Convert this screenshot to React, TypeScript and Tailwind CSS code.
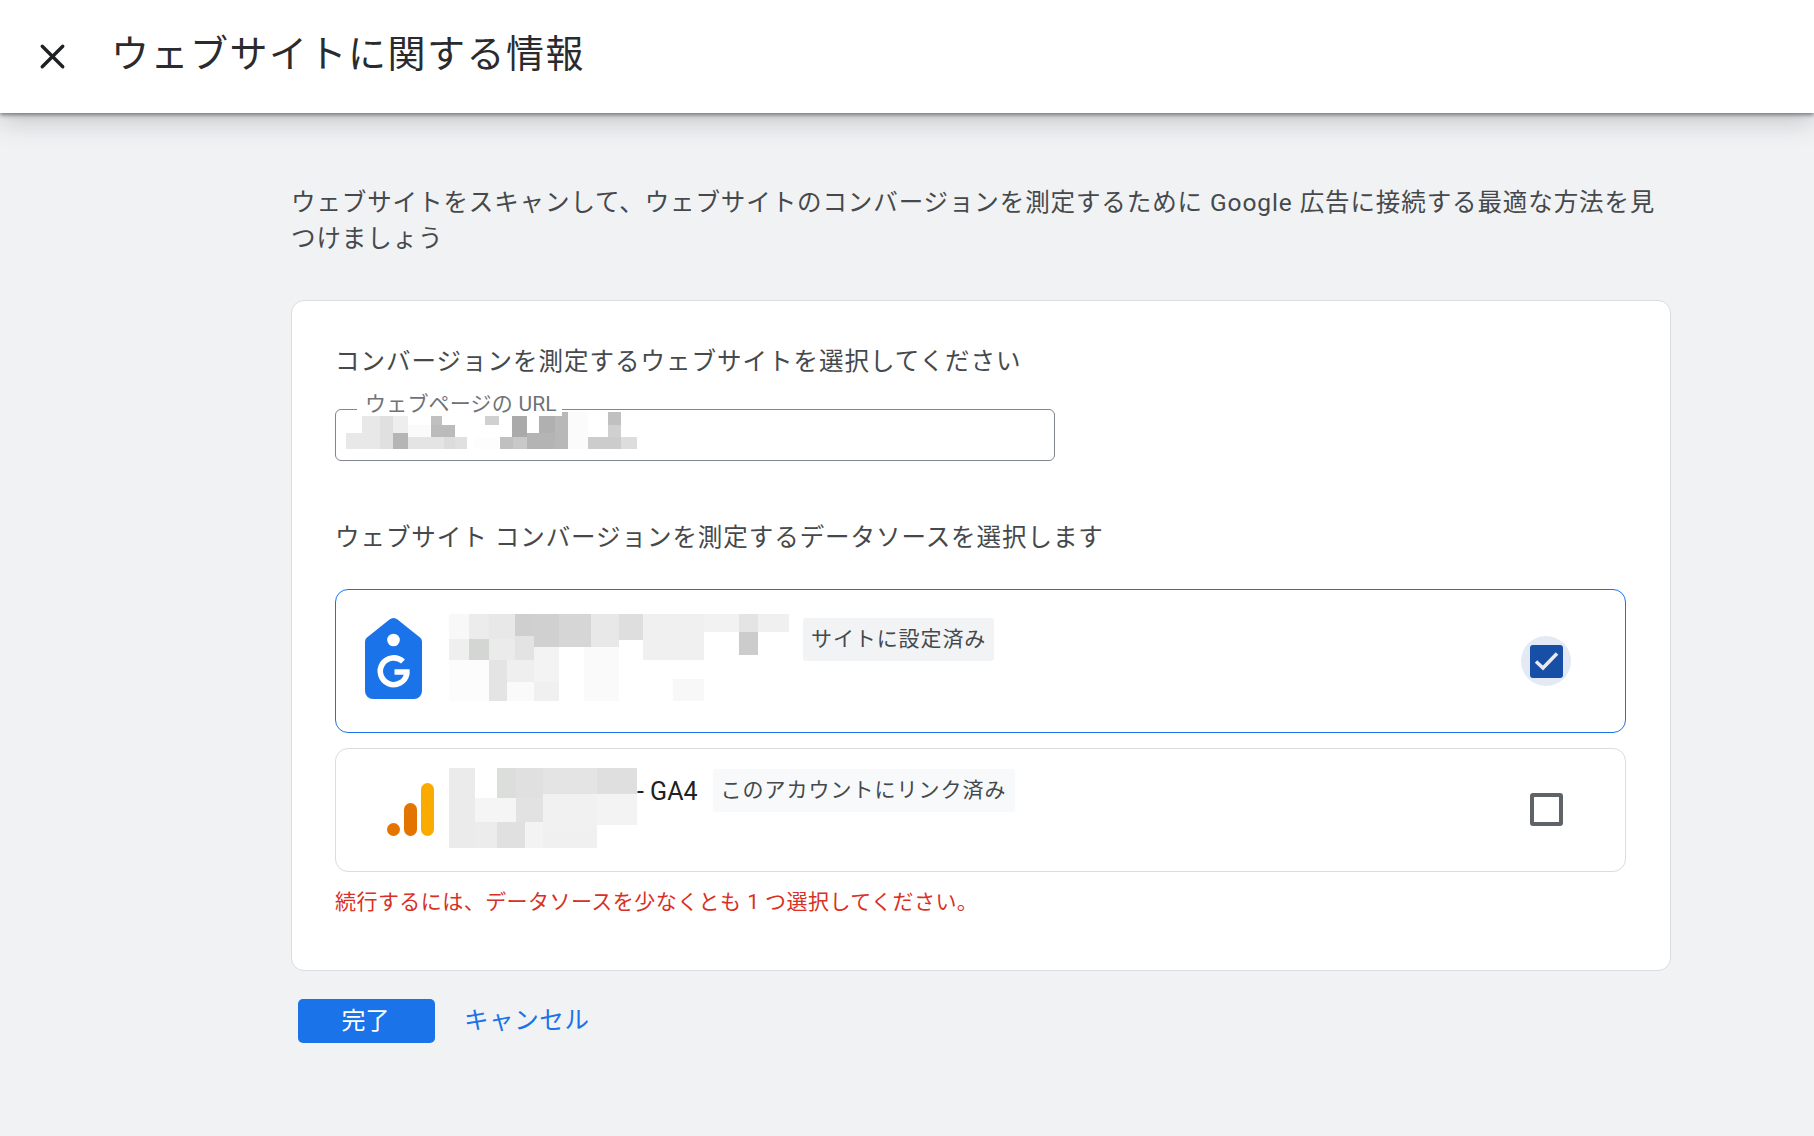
import { X } from "lucide-react";

type Block = [number, number, number, number, string];

const font = "font-['Roboto','Noto_Sans_CJK_JP',sans-serif]";

// redacted areas of the screenshot, in page coordinates
const urlBlocks: Block[] = [
  [362, 412, 18, 25, "#e8e8e8"],
  [380, 412, 13, 37, "#e0e0e0"],
  [393, 412, 15, 21, "#eeeeee"],
  [408, 425, 22, 12, "#fafafa"],
  [431, 412, 11, 13, "#c0c0c0"],
  [431, 425, 24, 12, "#bbbbbb"],
  [485, 412, 14, 13, "#d0d0d0"],
  [512, 412, 15, 25, "#aaaaaa"],
  [539, 412, 16, 25, "#b0b0b0"],
  [555, 412, 13, 25, "#b8b8b8"],
  [568, 412, 20, 37, "#fbfbfb"],
  [608, 412, 13, 13, "#c0c0c0"],
  [608, 425, 13, 12, "#d0d0d0"],
  [346, 433, 34, 16, "#e8e8e8"],
  [393, 433, 15, 16, "#b5b5b5"],
  [408, 437, 36, 12, "#e4e4e4"],
  [444, 437, 11, 12, "#dcdcdc"],
  [455, 437, 12, 12, "#e0e0e0"],
  [474, 437, 25, 12, "#fdfdfd"],
  [500, 437, 13, 12, "#c0c0c0"],
  [513, 437, 14, 12, "#c8c8c8"],
  [527, 433, 28, 16, "#b4b4b4"],
  [555, 437, 13, 12, "#b8b8b8"],
  [588, 437, 33, 12, "#cccccc"],
  [621, 437, 16, 12, "#dddddd"],
];

const adsBlocks: Block[] = [
  [449, 614, 20, 25, "#f8f8f8"],
  [469, 614, 20, 25, "#ececec"],
  [489, 614, 26, 25, "#e8e8e8"],
  [515, 614, 19, 22, "#cfcfcf"],
  [534, 614, 25, 33, "#d0d0d0"],
  [559, 614, 32, 33, "#d6d6d6"],
  [591, 614, 28, 33, "#e8e8e8"],
  [619, 614, 24, 26, "#dedede"],
  [643, 614, 61, 46, "#f0f0f0"],
  [704, 614, 35, 18, "#f2f2f2"],
  [739, 614, 19, 18, "#e4e4e4"],
  [758, 614, 31, 18, "#f0f0f0"],
  [739, 632, 19, 23, "#cccccc"],
  [449, 639, 20, 21, "#efefef"],
  [469, 639, 20, 21, "#d4d6d4"],
  [489, 639, 26, 21, "#ebebeb"],
  [515, 636, 19, 25, "#e3e3e3"],
  [534, 647, 25, 35, "#f3f3f3"],
  [584, 647, 35, 54, "#fafafa"],
  [449, 660, 40, 41, "#fcfcfc"],
  [489, 660, 18, 41, "#e3e4e3"],
  [507, 660, 27, 22, "#efefef"],
  [507, 682, 27, 19, "#fafafa"],
  [534, 682, 25, 19, "#f0f0f0"],
  [673, 679, 31, 22, "#f8f8f8"],
];

const ga4Blocks: Block[] = [
  [449, 769, 26, 80, "#ebebeb"],
  [497, 769, 19, 30, "#dcdedc"],
  [516, 769, 27, 30, "#e0e0e0"],
  [543, 769, 54, 26, "#e4e4e4"],
  [597, 769, 40, 26, "#dfdfdf"],
  [475, 799, 41, 24, "#f5f5f5"],
  [516, 799, 27, 24, "#e2e2e2"],
  [543, 795, 54, 31, "#f1f1f1"],
  [597, 795, 40, 31, "#f3f3f3"],
  [475, 823, 22, 26, "#ececec"],
  [497, 823, 28, 26, "#e0e0e0"],
  [525, 823, 18, 26, "#f3f3f3"],
  [543, 826, 54, 23, "#f0f0f0"],
];

function Mosaic({ blocks, x, y, w, h }: { blocks: Block[]; x: number; y: number; w: number; h: number }) {
  return (
    <svg width={w} height={h} viewBox={`${x} ${y} ${w} ${h}`} shapeRendering="crispEdges" className="block shrink-0">
      {blocks.map(([bx, by, bw, bh, fill], i) => (
        <rect key={i} x={bx} y={by} width={bw} height={bh} fill={fill} />
      ))}
    </svg>
  );
}

function AdsLogo() {
  return (
    <svg width="57" height="81" viewBox="0 0 57 81" className="block">
      <path
        d="M24.5 1.6 2 19.5A5.5 5.5 0 0 0 0 23.8V73a8 8 0 0 0 8 8h41a8 8 0 0 0 8-8V23.8a5.5 5.5 0 0 0-2-4.3L32.5 1.6a6.4 6.4 0 0 0-8 0Z"
        fill="#1a73e8"
      />
      <circle cx="28.5" cy="22" r="6.3" fill="#fff" />
      <path d="M38 43.6A13.4 13.4 0 1 0 41.8 56V54H29.5" fill="none" stroke="#fff" strokeWidth="5.6" />
    </svg>
  );
}

function AnalyticsLogo() {
  return (
    <svg width="47" height="53" viewBox="0 0 47 53" className="block">
      <rect x="34" y="0" width="13" height="53" rx="6.5" fill="#f9ab00" />
      <rect x="17" y="20" width="13" height="33" rx="6.5" fill="#e37400" />
      <circle cx="6.5" cy="46.5" r="6.5" fill="#e37400" />
    </svg>
  );
}

export default function App() {
  return (
    <div className={`min-h-screen bg-[#f1f2f4] ${font} text-[#45494c]`}>
      <header className="relative flex h-[113px] items-center bg-white pl-[32px] shadow-[0_2px_4px_rgba(60,64,67,0.6),0_8px_24px_rgba(60,64,67,0.25)]">
        <X size={41} strokeWidth={2} className="shrink-0 text-[#202124]" />
        <h1 className="ml-[38px] -mt-[6px] text-[38px] leading-[44px] font-normal tracking-[1.5px] text-[#2a2b2e]">ウェブサイトに関する情報</h1>
      </header>

      <main className="ml-[291px] w-[1380px] pt-[72px]">
        <p className="text-[24.5px] leading-[36px] tracking-[0.9px]">
          ウェブサイトをスキャンして、ウェブサイトのコンバージョンを測定するために Google 広告に接続する最適な方法を見つけましょう
        </p>

        <section className="mt-[43px] rounded-[13px] border border-[#dadce0] bg-white pt-[43px] pr-[44px] pb-[50px] pl-[43px]">
          <h2 className="text-[24.5px] leading-[36px] font-normal tracking-[1px]">コンバージョンを測定するウェブサイトを選択してください</h2>

          <div className="relative mt-[29px] flex h-[52px] w-[720px] items-start rounded-[6px] border border-[#80868b] pt-[2px] pl-[10px]">
            <span className="absolute -top-[18px] left-[21px] bg-white pr-[5px] pl-[8px] text-[21px] leading-[24px] tracking-[0.2px] whitespace-nowrap text-[#6f7377]">ウェブページの URL</span>
            <Mosaic blocks={urlBlocks} x={346} y={412} w={291} h={37} />
          </div>

          <h2 className="mt-[59px] text-[24.5px] leading-[36px] font-normal tracking-[0.95px]">ウェブサイト コンバージョンを測定するデータソースを選択します</h2>

          <div className="mt-[33px] flex h-[144px] items-start rounded-[13px] border border-[#1a73e8] pt-[24px] pr-[54px] pl-[29px]">
            <div className="flex w-[84px] shrink-0 pt-[4px]">
              <AdsLogo />
            </div>
            <Mosaic blocks={adsBlocks} x={449} y={614} w={340} h={87} />
            <span className="mt-[4px] ml-[14px] flex h-[43px] items-center rounded-[3px] bg-[#f1f3f4] px-[8px] text-[21px] tracking-[0.9px] whitespace-nowrap">サイトに設定済み</span>
            <div className="ml-auto mt-[22px] grid size-[50px] shrink-0 place-items-center rounded-full bg-[#e3e9f5]">
              <div className="grid size-[33px] place-items-center rounded-[3px] bg-[#174ea6]">
                <svg width="25" height="20" viewBox="0 0 25 20" className="block">
                  <path d="M2 10.5 9 17 23 2.5" fill="none" stroke="#e8eaed" strokeWidth="3.5" />
                </svg>
              </div>
            </div>
          </div>

          <div className="mt-[15px] flex h-[124px] items-start rounded-[13px] border border-[#dadce0] pt-[19px] pr-[62px] pl-[51px]">
            <div className="flex w-[62px] shrink-0 pt-[15px]">
              <AnalyticsLogo />
            </div>
            <Mosaic blocks={ga4Blocks} x={449} y={769} w={188} h={80} />
            <span className="mt-[6px] flex h-[36px] shrink-0 items-center text-[25px] whitespace-nowrap text-[#202124]">- GA4</span>
            <span className="mt-[1px] ml-[15px] flex h-[43px] items-center rounded-[3px] bg-[#f8f9fa] px-[8px] text-[21px] tracking-[1px] whitespace-nowrap">このアカウントにリンク済み</span>
            <div className="ml-auto mt-[25px] size-[33px] shrink-0 rounded-[3px] border-[4px] border-[#5f6368]" />
          </div>

          <p className="mt-[12px] text-[21px] leading-[36px] tracking-[0.45px] text-[#d93025]">続行するには、データソースを少なくとも 1 つ選択してください。</p>
        </section>

        <div className="mt-[28px] ml-[7px] flex items-center gap-[29px]">
          <button type="button" className="h-[44px] w-[137px] rounded-[5px] bg-[#1a73e8] pr-[2px] text-[24px] text-white">完了</button>
          <a className="text-[24.5px] tracking-[0.6px] text-[#1a73e8]">キャンセル</a>
        </div>
      </main>
    </div>
  );
}
